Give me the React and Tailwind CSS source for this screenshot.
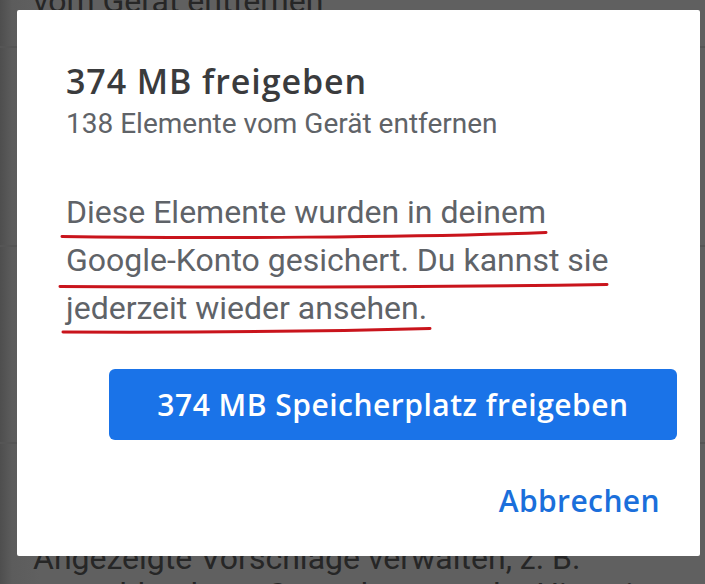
export default function App() {
  const roboto = { fontFamily: "Roboto, 'Liberation Sans', sans-serif" };
  const open = { fontFamily: "'Open Sans', Roboto, sans-serif" };
  return (
    <div className="relative w-[705px] h-[584px] overflow-hidden bg-[linear-gradient(90deg,#4e4e4e_0px,#5c5c5c_12px,#606060_40px,#606060_100%)]">
      {/* background list */}
      <div className="flex flex-col text-[#262626] text-[32px]" style={roboto}>
        <div className="h-[48px] border-b-2 border-[#555555] pl-[33px]">
          <div className="-mt-[19px] leading-[40px] whitespace-nowrap">vom Gerät entfernen</div>
        </div>
        <div className="h-[199px] border-b-2 border-[#555555]" />
        <div className="h-[197px] border-b-2 border-[#555555]" />
        <div className="pl-[33px] pt-[96px] leading-[36px] whitespace-nowrap">
          <div>Angezeigte Vorschläge verwalten, z. B.</div>
          <div>ausgeblendeten Sammlungen oder Hinweisen</div>
        </div>
      </div>

      {/* dialog */}
      <div className="absolute left-[17px] top-[10px] w-[683px] h-[546px] bg-white rounded-[2px] flex flex-col">
        <div className="pl-[49px] pt-[51px] flex flex-col">
          <div className="text-[34px] leading-[40px] font-semibold tracking-[0.9px] text-[#3a3b3d] whitespace-nowrap" style={open}>
            374 MB freigeben
          </div>
          <div className="mt-[7px] text-[28px] leading-[32px] text-[#5f6368] whitespace-nowrap" style={roboto}>
            138 Elemente vom Gerät entfernen
          </div>
          <div className="mt-[48px] text-[32px] leading-[48px] text-[#5f6368] whitespace-nowrap" style={roboto}>
            <div>Diese Elemente wurden in deinem</div>
            <div>Google-Konto gesichert. Du kannst sie</div>
            <div>jederzeit wieder ansehen.</div>
          </div>
        </div>
        <div className="mt-[37px] flex justify-end pr-[23px]">
          <button className="w-[568px] h-[71px] rounded-[6px] bg-[#1a73e8] text-white text-[30px] leading-[36px] font-semibold tracking-[0.5px] flex items-center justify-center" style={open}>
            374 MB Speicherplatz freigeben
          </button>
        </div>
        <div className="mt-[43px] flex justify-end pr-[40px]">
          <span className="text-[30px] leading-[36px] font-semibold tracking-[0.4px] text-[#1b6fdb]" style={open}>Abbrechen</span>
        </div>

        {/* red hand-drawn underlines */}
        <svg className="absolute left-0 top-0 pointer-events-none" width="683" height="546" viewBox="0 0 683 546">
          <g fill="none" stroke="#c9141c" strokeWidth="3" strokeLinecap="round">
            <path d="M45 226.5 C 180 228.5, 400 227.5, 529 222.5" />
            <path d="M43 276.5 C 250 277.5, 450 276.5, 590 274.5" />
            <path d="M46 322 C 160 322.5, 300 321.5, 413 318.5" />
          </g>
        </svg>
      </div>
    </div>
  );
}
